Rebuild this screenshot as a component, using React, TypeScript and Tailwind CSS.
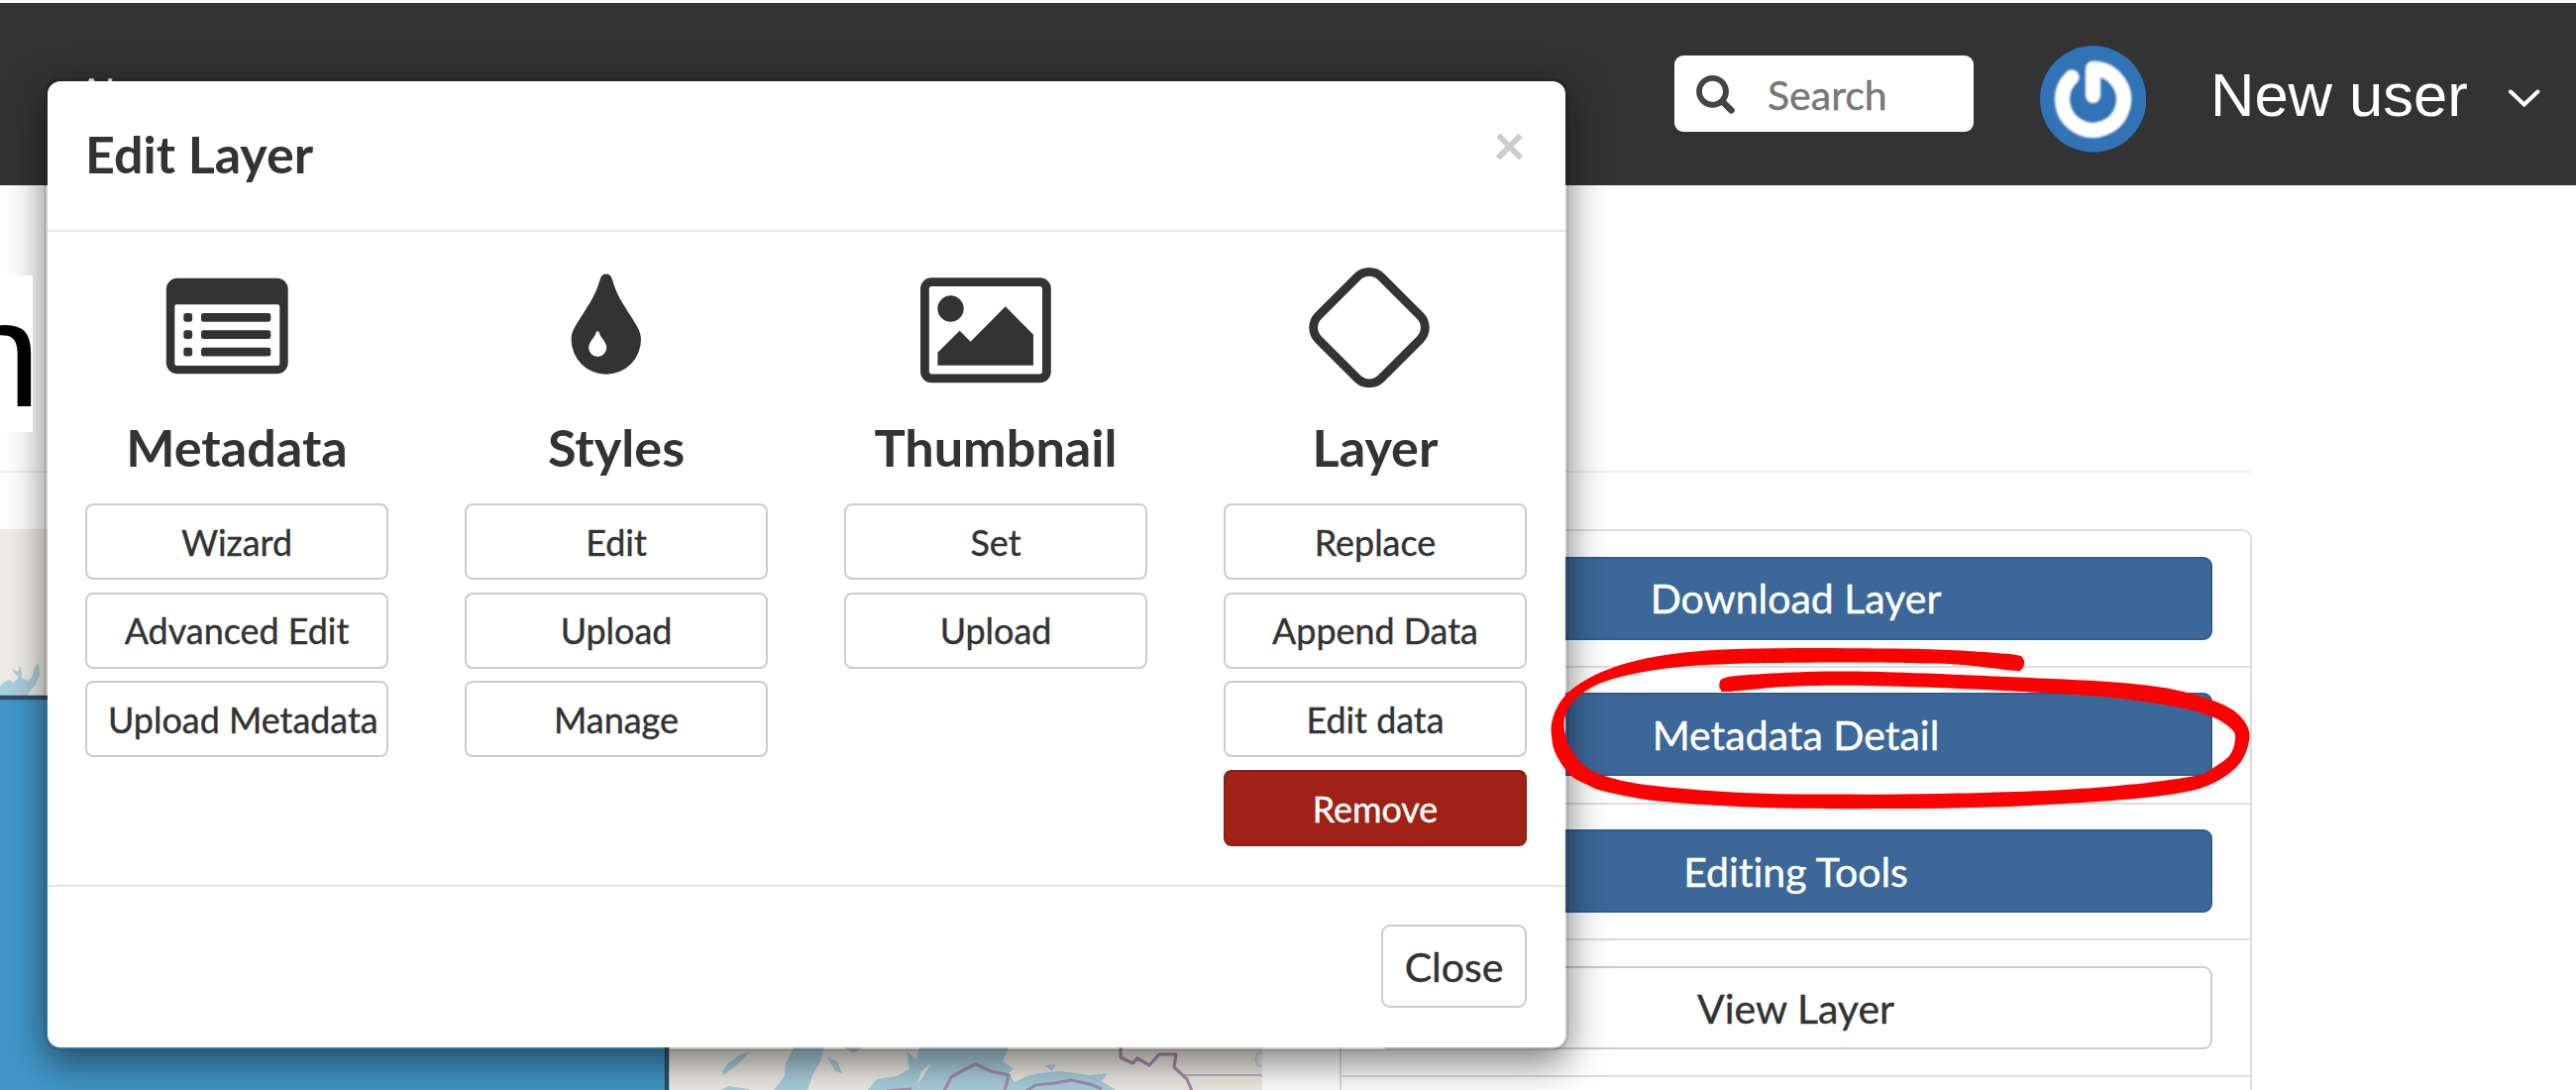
import React from "react";

type Point = [number, number];

/** Closed Catmull-Rom curve through the given points. */
function smooth(points: Point[]): string {
  const n = points.length;
  let d = `M${points[0][0]} ${points[0][1]}`;
  for (let i = 0; i < n; i++) {
    const p0 = points[(i - 1 + n) % n];
    const p1 = points[i];
    const p2 = points[(i + 1) % n];
    const p3 = points[(i + 2) % n];
    d += `C${p1[0] + (p2[0] - p0[0]) / 6} ${p1[1] + (p2[1] - p0[1]) / 6} ${p2[0] - (p3[0] - p1[0]) / 6} ${p2[1] - (p3[1] - p1[1]) / 6} ${p2[0]} ${p2[1]}`;
  }
  return d + "Z";
}

const MARKER: Point[] = [
  [2042, 665], [2035, 661], [1991, 657.3], [1940, 655], [1864.8, 654.2], [1800, 654.2], [1745.5, 655.2], [1700, 658.5], [1661, 664.6],
  [1630, 673], [1605, 683.7], [1586, 696], [1573.7, 710], [1566.5, 727.7], [1566, 743], [1570, 760.2], [1584, 781.3], [1600, 791], [1621, 799],
  [1675, 808.5], [1780.6, 815], [1899.9, 816.1], [2019, 814.2], [2131, 808], [2201.5, 800], [2236.6, 789], [2261, 769.8],
  [2270.3, 745], [2264.6, 727], [2243.6, 711], [2194.5, 696], [2131, 688.3], [2026, 683], [1921, 678.7], [1850.8, 677.6],
  [1780.6, 680], [1742, 683.7], [1735.5, 690], [1737, 696], [1744, 698], [1801.6, 693], [1864.8, 691.7], [1956, 694], [2075, 699.8],
  [2145.4, 705.5], [2201.5, 714.3], [2233, 723.5], [2252, 735.4], [2256, 745], [2250.6, 762], [2231.7, 776.3], [2215.5, 783],
  [2152.4, 791.6], [2075, 797.4], [1956, 801], [1850.8, 801.6], [1752.5, 799.7], [1668, 792.8], [1626, 785], [1601.7, 774.8],
  [1586, 757], [1580, 742], [1579, 726], [1586, 710], [1605, 694.4], [1633, 683.7], [1682, 674.5], [1745.5, 670], [1850.8, 668.4],
  [1949, 669.5], [1991, 672], [2032, 676.8], [2040, 676], [2043, 670],
];

const Dark = "#333333";

function MetadataIcon() {
  return (
    <svg className="h-[124px] w-[124px]" viewBox="167 268 124 124" fill={Dark}>
      <path fillRule="evenodd" d="M179 280.7H279.5a11.2 11.2 0 0 1 11.2 11.2V366a11.2 11.2 0 0 1-11.2 11.2H179a11.2 11.2 0 0 1-11.2-11.2V291.900a11.2 11.2 0 0 1 11.2-11.2ZM178.300 307.300a2 2 0 0 0-2 2V367a2 2 0 0 0 2 2H280.300a2 2 0 0 0 2-2V309.300a2 2 0 0 0-2-2Z" />
      {[316, 333.3, 350.8].map((y) => (
        <g key={y}>
          <rect x="185.300" y={y} width="8.800" height="8.800" rx="2.400" />
          <rect x="203" y={y} width="70.300" height="8.800" rx="2.400" />
        </g>
      ))}
    </svg>
  );
}

function StylesIcon() {
  return (
    <svg className="h-[124px] w-[72px]" viewBox="576 268 72 124" fill={Dark}>
      <path fillRule="evenodd" d="M611.8 276.400C615 276.400 616.800 278.200 617.800 281.500C622 297 629 307 636 318C642 327.500 647 334 647 342.500A35.200 35.200 0 0 1 576.600 342.500C576.600 334 581.600 327.500 587.600 318C594.600 307 601.600 297 605.800 281.500C606.800 278.200 608.600 276.400 611.800 276.400ZM603.200 334.300C602.200 334.300 601.800 335.200 601.400 336.300C600 341 594.200 345 594.200 351A9 9 0 0 0 612.200 351C612.200 345 606.400 341 605 336.300C604.600 335.200 604.200 334.300 603.200 334.300Z" />
    </svg>
  );
}

function ThumbnailIcon() {
  return (
    <svg className="h-[124px] w-[132px]" viewBox="929 268 132 124" fill={Dark}>
      <rect x="933.400" y="284.700" width="123" height="97.200" rx="6.800" fill="none" stroke={Dark} strokeWidth="8.800" />
      <circle cx="959.500" cy="311.500" r="13.200" />
      <path d="M946.400 355.700 968.600 333.700 979.600 344.700 1014.800 309.300 1043 337.700V368.700H946.400Z" />
    </svg>
  );
}

function LayerIcon() {
  return (
    <svg className="h-[124px] w-[124px]" viewBox="1319.400 268 124 124">
      <rect x="1336.600" y="285.800" width="89.600" height="89.600" rx="17" transform="rotate(45 1381.400 330.600)" fill="none" stroke={Dark} strokeWidth="8.800" />
    </svg>
  );
}

function Action({ label, danger, wide }: { label: string; danger?: boolean; wide?: boolean }) {
  return (
    <button
      className={
        "flex h-[77px] w-full items-center whitespace-nowrap rounded-[8px] border-[2.5px] pt-[2px] text-[35.900px] leading-none [-webkit-text-stroke:0.400px] " +
        (danger ? "border-[#8b1d13] bg-[#a02115] text-white " : "border-[#cccccc] bg-white text-[#333333] ") +
        (wide ? "justify-start pl-[21px]" : "justify-center")
      }
    >
      {label}
    </button>
  );
}

function Column({ title, icon, shift, children }: { title: string; icon: React.ReactNode; shift: string; children: React.ReactNode }) {
  return (
    <div className="flex w-[306px] flex-col">
      <div className={"flex h-[124px] " + shift}>{icon}</div>
      <h3 className="mt-[26px] h-[90px] text-center text-[52.200px] font-bold leading-[66px] text-[#333333]">{title}</h3>
      <div className="flex flex-col gap-[12.700px]">{children}</div>
    </div>
  );
}

function Modal() {
  return (
    <section className="absolute left-[45px] top-[79px] flex h-[980.500px] w-[1538px] flex-col rounded-[16px] border-[3px] border-black/20 bg-white bg-clip-padding shadow-[0_13px_38px_rgba(0,0,0,0.5)]">
      <header className="flex h-[151.500px] justify-between border-b-2 border-[#e5e5e5] pl-[38px] pr-[40px]">
        <h2 className="pt-[40px] text-[52px] font-bold leading-[66px] text-[#333333]">Edit Layer</h2>
        <button className="h-[54px] pt-[36px] text-[57px] font-black leading-[54px] text-[#cccccc]">×</button>
      </header>
      <div className="flex h-[661px] justify-between border-b-2 border-[#e5e5e5] pl-[38px] pr-[39px] pt-[34.500px]">
        <Column title="Metadata" icon={<MetadataIcon />} shift="pl-[81px]">
          <Action label="Wizard" />
          <Action label="Advanced Edit" />
          <Action label="Upload Metadata" wide />
        </Column>
        <Column title="Styles" icon={<StylesIcon />} shift="pl-[107px]">
          <Action label="Edit" />
          <Action label="Upload" />
          <Action label="Manage" />
        </Column>
        <Column title="Thumbnail" icon={<ThumbnailIcon />} shift="pl-[76.500px]">
          <Action label="Set" />
          <Action label="Upload" />
        </Column>
        <Column title="Layer" icon={<LayerIcon />} shift="pl-[85px]">
          <Action label="Replace" />
          <Action label="Append Data" />
          <Action label="Edit data" />
          <Action label="Remove" danger />
        </Column>
      </div>
      <footer className="flex justify-end pr-[39px] pt-[38.500px]">
        <button className="flex h-[84px] w-[147px] items-center justify-center rounded-[9px] border-[2.5px] border-[#cccccc] text-[41px] leading-none text-[#333333] [-webkit-text-stroke:0.400px]">Close</button>
      </footer>
    </section>
  );
}

function TopBar() {
  return (
    <nav className="mt-[3px] flex h-[183.500px] shrink-0 items-start overflow-hidden bg-[#333333]">
      <span className="ml-[78px] w-[1612px] pt-[65.500px] text-[42px] leading-[50.400px] text-white">Ab</span>
      <label className="mt-[53px] flex h-[77px] w-[302px] items-center rounded-[9px] bg-white">
        <svg className="ml-[20px] h-[42px] w-[42px]" viewBox="1710 74 42 42" fill="none" stroke="#444444" strokeLinecap="round">
          <circle cx="1728.500" cy="92.300" r="13.500" strokeWidth="5.800" />
          <path d="M1739 103 1747.500 111.300" strokeWidth="6.500" />
        </svg>
        <span className="ml-[32px] pt-[2px] text-[41px] leading-none text-[#777777] [-webkit-text-stroke:0.400px]">Search</span>
      </label>
      <svg className="ml-[66.500px] mt-[42.500px] h-[108px] w-[107.500px]" viewBox="2058.500 45.500 107.500 108">
        <defs>
          <filter id="soft" x="-20%" y="-20%" width="140%" height="140%"><feGaussianBlur stdDeviation="0.9" /></filter>
        </defs>
        <circle cx="2112.200" cy="99.500" r="53.700" fill="#3173b7" />
        <g fill="none" stroke="#1d5594" strokeOpacity="0.350" strokeWidth="18" strokeLinecap="round" strokeLinejoin="round" filter="url(#soft)">
          <path d="M2091 77.500A31 31 0 1 0 2112 68.800V96" />
        </g>
        <g fill="none" stroke="#ffffff" strokeWidth="15.500" strokeLinecap="round" strokeLinejoin="round" filter="url(#soft)">
          <path d="M2090.500 77.500A31 31 0 1 0 2112 68.800V96" />
        </g>
      </svg>
      <span className="ml-[65px] mt-[58px] w-[298px] whitespace-nowrap font-['Liberation_Sans',Arial,sans-serif] text-[61.500px] leading-[70px] text-white">New user</span>
      <svg className="mt-[83px] h-[24px] w-[36px]" viewBox="2529 85 36 24" fill="none" stroke="#ffffff" strokeWidth="4" strokeLinecap="round">
        <path d="M2534 91.500 2547.700 104.500 2561.400 91.500" />
      </svg>
    </nav>
  );
}

function MapPane() {
  return (
    <svg className="h-[567px] w-[1274px] shrink-0" viewBox="0 533 1274 567">
      <rect x="0" y="533" width="1274" height="567" fill="#efece5" />
      <g fill="#a9cfdd">
        <path d="M0 702V692L3 688 9 685 13 688 17 685 19 682 15 679 12 674 18 677 20 671 22 677 22 683 28 686 32 682 35 673 39 668 40 680 36 690 32 694 27 702Z" />
        <path d="M729 1080 735 1072 746 1064 757 1060 749 1069 737 1079 730 1084ZM835 1066 845 1070 850 1082 843 1080ZM801 1056H832L828 1070 820 1084 815 1100H780L792 1085 793 1072ZM726 1100 735 1095 755 1098 760 1100Z" />
        <path d="M875 1100 885 1088 905 1085 918 1078 915 1060 925 1068 928 1056H1018L1012 1070 1024 1078 1030 1086 1050 1082 1070 1080 1100 1084 1118 1082 1112 1090 1128 1100ZM1054 1074 1066 1073 1062 1080ZM852 1056 862 1062 870 1056Z" />
      </g>
      <path d="M926 1094 940 1072 930 1080ZM1018 1082 1032 1070 1040 1083 1024 1091Z" fill="#efece5" />
      <g fill="none" stroke="#a78fb0" strokeWidth="3.200" strokeLinejoin="round">
        <path d="M895 1100 920 1098M953 1100 960 1086 974 1078 985 1073 1000 1080 1018 1084 1014 1100M1036 1100 1045 1094 1065 1092 1081 1089 1100 1093 1112 1098M1131 1056V1066L1143 1072 1148 1067 1160 1074 1170 1063 1187 1063 1185 1076 1198 1088 1203 1100" />
        <path d="M1195 1084H1274" strokeOpacity="0.600" strokeWidth="2" />
      </g>
      <path d="M1274 1060Q1266 1063 1268 1070T1274 1074" fill="none" stroke="#a9cfdd" strokeWidth="2" strokeOpacity="0.700" />
      <rect x="-10" y="703" width="683" height="410" fill="#4296c8" stroke="#2f5064" strokeWidth="4.500" />
    </svg>
  );
}

function ToolRow({ label, plain }: { label: string; plain?: boolean }) {
  return (
    <div className="h-[137.800px] shrink-0 border-b-2 border-[#dddddd] px-[38px] pt-[25.700px]">
      <button
        className={
          "flex h-[84px] w-full items-center justify-center rounded-[9px] border-[2.5px] text-[41px] leading-none [-webkit-text-stroke:0.400px] " +
          (plain ? "border-[#cccccc] bg-white text-[#333333]" : "border-[#355a88] bg-[#3c6799] text-white")
        }
      >
        {label}
      </button>
    </div>
  );
}

export default function App() {
  return (
    <main className="relative flex h-[1100px] w-[2600px] flex-col overflow-hidden bg-white font-[Lato,sans-serif] [font-variant-ligatures:none]">
      <TopBar />
      <div className="h-[290.500px] w-[2273px] shrink-0 border-b-2 border-[#eeeeee]" />
      <div className="flex pt-[57px]">
        <MapPane />
        <aside className="ml-[78px] flex h-[620px] w-[921px] shrink-0 flex-col rounded-t-[10px] border-2 border-[#dddddd]">
          <ToolRow label="Download Layer" />
          <ToolRow label="Metadata Detail" />
          <ToolRow label="Editing Tools" />
          <ToolRow label="View Layer" plain />
        </aside>
      </div>
      <Modal />
      <div className="absolute left-0 top-[278px] flex h-[158px] w-[33px] justify-end overflow-hidden bg-white font-['Liberation_Sans',Arial,sans-serif] text-[153px] leading-[158px] text-black">
        <span className="-mr-[8px]">n</span>
      </div>
      <svg className="pointer-events-none absolute left-0 top-0 h-[1100px] w-[2600px]" viewBox="0 0 2600 1100">
        <path d={smooth(MARKER)} fill="#ff0000" />
      </svg>
    </main>
  );
}
